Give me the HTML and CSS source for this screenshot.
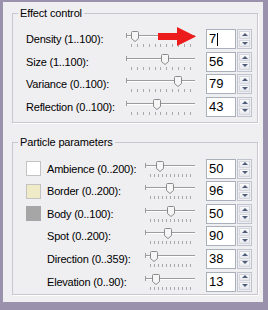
FILE: index.html
```html
<!DOCTYPE html>
<html lang="en">

<head>
    <meta charset="UTF-8">
    <title>Effect control</title>
    <link rel="stylesheet" href="styles.css">
</head>

<body>
    <div class="window">
        <fieldset class="group group-effect">
            <legend>Effect control</legend>

            <div class="row">
                <div class="label">Density (1..100):</div>
                <div class="slider">
                    <div class="track"></div>
                    <div class="ticks"><span></span><span></span><span></span><span></span><span></span><span></span><span></span><span></span><span></span><span></span><span></span></div>
                    <svg class="thumb" style="--v:.07" width="8" height="11" viewBox="0 0 8 11"><path d="M.5 1.5a1 1 0 0 1 1-1h5a1 1 0 0 1 1 1v6l-3.5 3-3.5-3z" /></svg>
                    <!-- red pointer -->
                    <svg class="arrow" width="38" height="19" viewBox="0 0 38 19"><path d="M0 6h19V0l19 9.5L19 19v-6H0z" /></svg>
                </div>
                <div class="spin">
                    <div class="edit">7<span class="caret"></span></div>
                    <div class="btns"><div class="up"></div><div class="down"></div></div>
                </div>
            </div>

            <div class="row">
                <div class="label">Size (1..100):</div>
                <div class="slider">
                    <div class="track"></div>
                    <div class="ticks"><span></span><span></span><span></span><span></span><span></span><span></span><span></span><span></span><span></span><span></span><span></span></div>
                    <svg class="thumb" style="--v:.56" width="8" height="11" viewBox="0 0 8 11"><path d="M.5 1.5a1 1 0 0 1 1-1h5a1 1 0 0 1 1 1v6l-3.5 3-3.5-3z" /></svg>
                </div>
                <div class="spin">
                    <div class="edit">56</div>
                    <div class="btns"><div class="up"></div><div class="down"></div></div>
                </div>
            </div>

            <div class="row">
                <div class="label">Variance (0..100):</div>
                <div class="slider">
                    <div class="track"></div>
                    <div class="ticks"><span></span><span></span><span></span><span></span><span></span><span></span><span></span><span></span><span></span><span></span><span></span></div>
                    <svg class="thumb" style="--v:.79" width="8" height="11" viewBox="0 0 8 11"><path d="M.5 1.5a1 1 0 0 1 1-1h5a1 1 0 0 1 1 1v6l-3.5 3-3.5-3z" /></svg>
                </div>
                <div class="spin">
                    <div class="edit">79</div>
                    <div class="btns"><div class="up"></div><div class="down"></div></div>
                </div>
            </div>

            <div class="row">
                <div class="label">Reflection (0..100):</div>
                <div class="slider">
                    <div class="track"></div>
                    <div class="ticks"><span></span><span></span><span></span><span></span><span></span><span></span><span></span><span></span><span></span><span></span><span></span></div>
                    <svg class="thumb" style="--v:.43" width="8" height="11" viewBox="0 0 8 11"><path d="M.5 1.5a1 1 0 0 1 1-1h5a1 1 0 0 1 1 1v6l-3.5 3-3.5-3z" /></svg>
                </div>
                <div class="spin">
                    <div class="edit">43</div>
                    <div class="btns"><div class="up"></div><div class="down"></div></div>
                </div>
            </div>
        </fieldset>

        <fieldset class="group group-particle">
            <legend>Particle parameters</legend>

            <div class="row">
                <div class="swatch swatch-white"></div>
                <div class="label">Ambience (0..200):</div>
                <div class="slider">
                    <div class="track"></div>
                    <div class="ticks"><span></span><span></span><span></span><span></span><span></span><span></span><span></span><span></span><span></span><span></span><span></span></div>
                    <svg class="thumb" style="--v:.25" width="8" height="11" viewBox="0 0 8 11"><path d="M.5 1.5a1 1 0 0 1 1-1h5a1 1 0 0 1 1 1v6l-3.5 3-3.5-3z" /></svg>
                </div>
                <div class="spin">
                    <div class="edit">50</div>
                    <div class="btns"><div class="up"></div><div class="down"></div></div>
                </div>
            </div>

            <div class="row">
                <div class="swatch swatch-yellow"></div>
                <div class="label">Border (0..200):</div>
                <div class="slider">
                    <div class="track"></div>
                    <div class="ticks"><span></span><span></span><span></span><span></span><span></span><span></span><span></span><span></span><span></span><span></span><span></span></div>
                    <svg class="thumb" style="--v:.48" width="8" height="11" viewBox="0 0 8 11"><path d="M.5 1.5a1 1 0 0 1 1-1h5a1 1 0 0 1 1 1v6l-3.5 3-3.5-3z" /></svg>
                </div>
                <div class="spin">
                    <div class="edit">96</div>
                    <div class="btns"><div class="up"></div><div class="down"></div></div>
                </div>
            </div>

            <div class="row">
                <div class="swatch swatch-gray"></div>
                <div class="label">Body (0..100):</div>
                <div class="slider">
                    <div class="track"></div>
                    <div class="ticks"><span></span><span></span><span></span><span></span><span></span><span></span><span></span><span></span><span></span><span></span><span></span></div>
                    <svg class="thumb" style="--v:.5" width="8" height="11" viewBox="0 0 8 11"><path d="M.5 1.5a1 1 0 0 1 1-1h5a1 1 0 0 1 1 1v6l-3.5 3-3.5-3z" /></svg>
                </div>
                <div class="spin">
                    <div class="edit">50</div>
                    <div class="btns"><div class="up"></div><div class="down"></div></div>
                </div>
            </div>

            <div class="row">
                <div class="swatch swatch-none"></div>
                <div class="label">Spot (0..200):</div>
                <div class="slider">
                    <div class="track"></div>
                    <div class="ticks"><span></span><span></span><span></span><span></span><span></span><span></span><span></span><span></span><span></span><span></span><span></span></div>
                    <svg class="thumb" style="--v:.45" width="8" height="11" viewBox="0 0 8 11"><path d="M.5 1.5a1 1 0 0 1 1-1h5a1 1 0 0 1 1 1v6l-3.5 3-3.5-3z" /></svg>
                </div>
                <div class="spin">
                    <div class="edit">90</div>
                    <div class="btns"><div class="up"></div><div class="down"></div></div>
                </div>
            </div>

            <div class="row">
                <div class="swatch swatch-none"></div>
                <div class="label">Direction (0..359):</div>
                <div class="slider">
                    <div class="track"></div>
                    <div class="ticks"><span></span><span></span><span></span><span></span><span></span><span></span><span></span><span></span><span></span><span></span><span></span></div>
                    <svg class="thumb" style="--v:.106" width="8" height="11" viewBox="0 0 8 11"><path d="M.5 1.5a1 1 0 0 1 1-1h5a1 1 0 0 1 1 1v6l-3.5 3-3.5-3z" /></svg>
                </div>
                <div class="spin">
                    <div class="edit">38</div>
                    <div class="btns"><div class="up"></div><div class="down"></div></div>
                </div>
            </div>

            <div class="row">
                <div class="swatch swatch-none"></div>
                <div class="label">Elevation (0..90):</div>
                <div class="slider">
                    <div class="track"></div>
                    <div class="ticks"><span></span><span></span><span></span><span></span><span></span><span></span><span></span><span></span><span></span><span></span><span></span></div>
                    <svg class="thumb" style="--v:.144" width="8" height="11" viewBox="0 0 8 11"><path d="M.5 1.5a1 1 0 0 1 1-1h5a1 1 0 0 1 1 1v6l-3.5 3-3.5-3z" /></svg>
                </div>
                <div class="spin">
                    <div class="edit">13</div>
                    <div class="btns"><div class="up"></div><div class="down"></div></div>
                </div>
            </div>
        </fieldset>
    </div>
</body>

</html>
```

FILE: styles.css
```css
body {
    margin: 0;
    width: 268px;
    height: 310px;
    background-color: #9a92ac;
    font-family: "Liberation Sans", Arial, sans-serif;
    font-size: 11px;
    color: #000
}

.window {
    box-sizing: border-box;
    margin: 2px 5px 0 3px;
    height: 300px;
    padding: 5px 5px 0 9px;
    background-color: #efeef1
}

.group {
    margin: 0;
    padding: 8px 5px 4px 13px;
    border: 1px solid #c9c6d0;
    box-shadow: 1px 1px 0 #fff;
    min-width: 0
}

.group legend {
    margin-left: -8px;
    padding: 0 2px;
    line-height: 13px;
    letter-spacing: -0.15px
}

.group-particle {
    margin-top: 13px;
    padding-bottom: 1px
}

.row {
    display: flex;
    align-items: center;
    height: 22.6px
}

.label {
    white-space: nowrap;
    letter-spacing: -0.2px
}

.group-effect .label {
    width: 101px
}

.group-particle .label {
    width: 99px
}

.swatch {
    box-sizing: border-box;
    width: 15px;
    height: 15px;
    margin-right: 6px;
    border: 1px solid #c3c3c3;
    flex: none
}

.swatch-white {
    background-color: #fff
}

.swatch-yellow {
    background-color: #efebc6
}

.swatch-gray {
    background-color: #a6a6a6;
    border-color: #a6a6a6
}

.swatch-none {
    border: none
}

.slider {
    position: relative;
    height: 16px;
    flex: none
}

.group-effect .slider {
    width: 69px
}

.group-particle .slider {
    width: 50px
}

.track {
    position: relative;
    height: 1px;
    margin-top: 4px;
    background-color: #9c9c9c;
    border-bottom: 1px solid #fff
}

.track::before {
    content: "";
    position: absolute;
    left: 0;
    top: -2px;
    width: 1px;
    height: 5px;
    background-color: #9c9c9c
}

.ticks {
    display: flex;
    justify-content: space-between;
    height: 3px;
    margin: 7px 4px 0 5px
}

.ticks span {
    width: 1px;
    background-color: #a9a9a9
}

.thumb {
    position: absolute;
    top: 0;
    left: calc(5px + (100% - 9px) * var(--v));
    margin-left: -4px
}

.thumb path {
    fill: #f6f6f6;
    stroke: #8a8a8a;
    stroke-width: 1
}

.arrow {
    position: absolute;
    left: 32px;
    top: -4px
}

.arrow path {
    fill: #ec1c1c
}

.spin {
    display: flex;
    gap: 1px;
    height: 20px;
    margin-left: 11px;
    flex: none
}

.edit {
    box-sizing: border-box;
    width: 30px;
    height: 20px;
    padding-left: 2px;
    border: 1px solid #a9b0bc;
    background-color: #fff;
    font-size: 13px;
    line-height: 18px;
    display: flex;
    align-items: center
}

.caret {
    display: inline-block;
    width: 1px;
    height: 13px;
    margin-left: 1px;
    background-color: #000
}

.btns {
    box-sizing: border-box;
    width: 15px;
    display: flex;
    flex-direction: column;
    border: 1px solid #bfc3cd;
    padding: 1px
}

.btns div {
    flex: 1;
    position: relative;
    border: 1px solid #d3d6de;
    background: linear-gradient(#fbfbfc, #e6e7ec)
}

.btns div + div {
    margin-top: 1px
}

.btns div::after {
    content: "";
    position: absolute;
    left: 50%;
    top: 50%;
    margin: -2px 0 0 -3px;
    border-left: 3px solid transparent;
    border-right: 3px solid transparent
}

.btns .up::after {
    border-bottom: 3px solid #4f5d7a
}

.btns .down::after {
    border-top: 3px solid #4f5d7a
}
```
